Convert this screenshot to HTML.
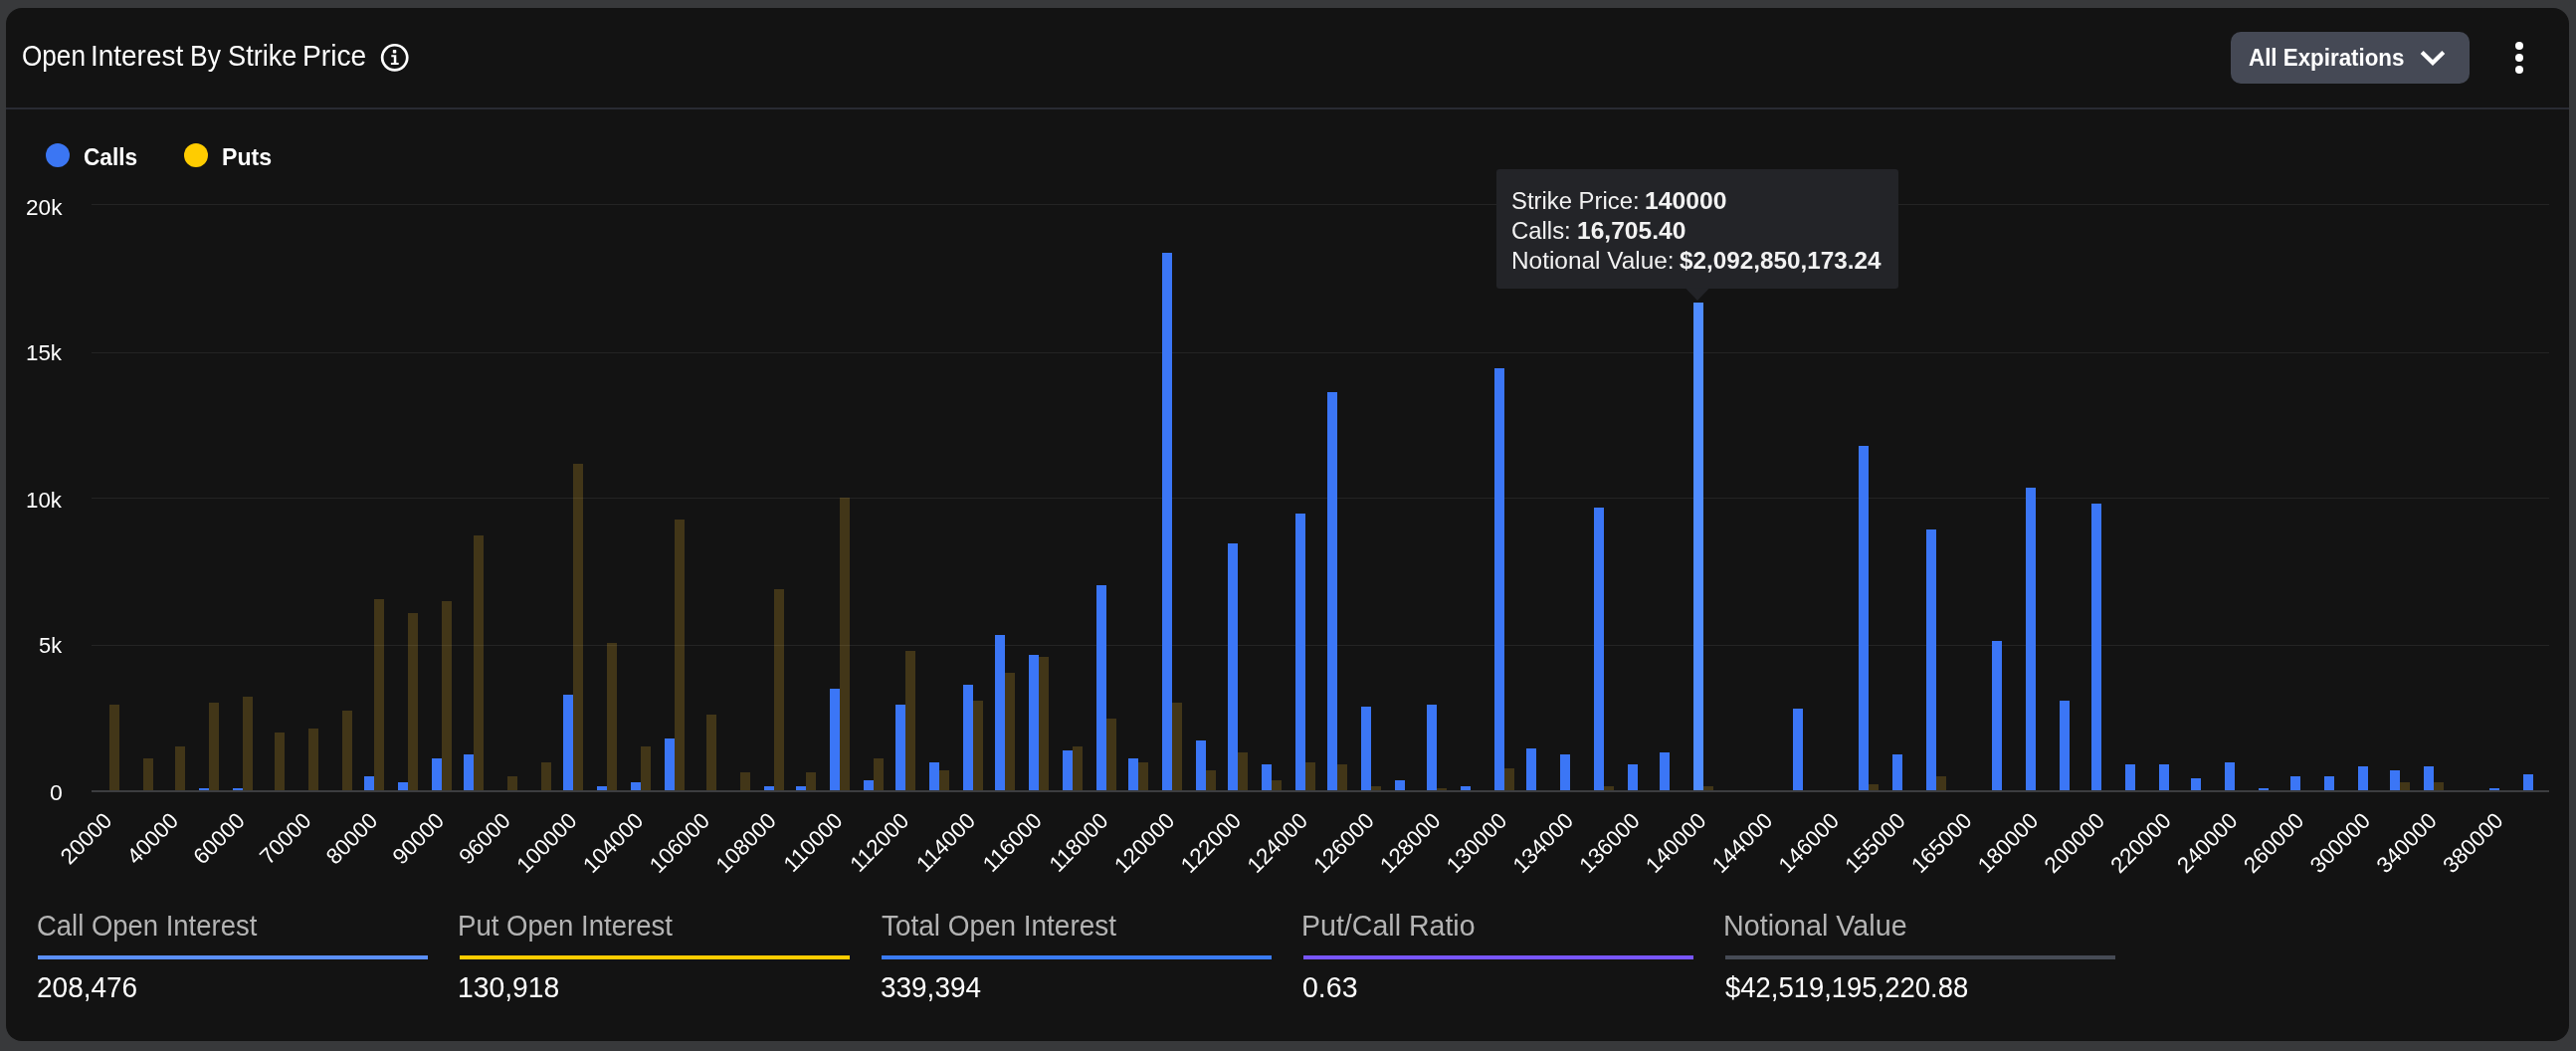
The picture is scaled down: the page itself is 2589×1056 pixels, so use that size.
<!DOCTYPE html>
<html><head><meta charset="utf-8"><title>Open Interest By Strike Price</title>
<style>
html,body{margin:0;padding:0}
body{width:2589px;height:1056px;background:#38393b;position:relative;overflow:hidden;font-family:"Liberation Sans",sans-serif}
.card{position:absolute;left:6px;top:8px;width:2576px;height:1038px;border-radius:16px;background:#131313}
.sep{position:absolute;left:6px;top:108px;width:2576px;height:2px;background:#292b33}
.t{position:absolute;white-space:nowrap;transform-origin:0 0}
.tl{position:absolute;left:0;top:0;width:2589px;height:1056px;will-change:transform}
svg{position:absolute;left:0;top:0}
svg text{font-family:"Liberation Sans",sans-serif}
.btn{position:absolute;left:2242px;top:32px;width:240px;height:52px;border-radius:10px;background:#454955}
.dot{position:absolute;width:8.3px;height:8.3px;border-radius:50%;background:#fff;left:2527.85px}
.lg{position:absolute;width:24.2px;height:24.2px;border-radius:50%;top:143.9px}
</style></head><body>
<div class="card"></div>
<div class="sep"></div>
<div class="btn"></div>
<div class="dot" style="top:41.85px"></div><div class="dot" style="top:53.85px"></div><div class="dot" style="top:66.05px"></div>
<div class="lg" style="left:45.9px;background:#3b76f3"></div>
<div class="lg" style="left:185.3px;background:#ffcc00"></div>
<svg style="will-change:transform" width="2589" height="1056" viewBox="0 0 2589 1056" shape-rendering="crispEdges">
<rect x="92" y="205" width="2470" height="1" fill="#242424"/>
<rect x="92" y="354" width="2470" height="1" fill="#242424"/>
<rect x="92" y="500" width="2470" height="1" fill="#242424"/>
<rect x="92" y="648" width="2470" height="1" fill="#242424"/>
<rect x="110" y="708" width="10" height="86" fill="#ffc42c" fill-opacity="0.2"/>
<rect x="144" y="762" width="10" height="32" fill="#ffc42c" fill-opacity="0.2"/>
<rect x="176" y="750" width="10" height="44" fill="#ffc42c" fill-opacity="0.2"/>
<rect x="200" y="792" width="10" height="2" fill="#3b76f6"/>
<rect x="210" y="706" width="10" height="88" fill="#ffc42c" fill-opacity="0.2"/>
<rect x="234" y="792" width="10" height="2" fill="#3b76f6"/>
<rect x="244" y="700" width="10" height="94" fill="#ffc42c" fill-opacity="0.2"/>
<rect x="276" y="736" width="10" height="58" fill="#ffc42c" fill-opacity="0.2"/>
<rect x="310" y="732" width="10" height="62" fill="#ffc42c" fill-opacity="0.2"/>
<rect x="344" y="714" width="10" height="80" fill="#ffc42c" fill-opacity="0.2"/>
<rect x="366" y="780" width="10" height="14" fill="#3b76f6"/>
<rect x="376" y="602" width="10" height="192" fill="#ffc42c" fill-opacity="0.2"/>
<rect x="400" y="786" width="10" height="8" fill="#3b76f6"/>
<rect x="410" y="616" width="10" height="178" fill="#ffc42c" fill-opacity="0.2"/>
<rect x="434" y="762" width="10" height="32" fill="#3b76f6"/>
<rect x="444" y="604" width="10" height="190" fill="#ffc42c" fill-opacity="0.2"/>
<rect x="466" y="758" width="10" height="36" fill="#3b76f6"/>
<rect x="476" y="538" width="10" height="256" fill="#ffc42c" fill-opacity="0.2"/>
<rect x="510" y="780" width="10" height="14" fill="#ffc42c" fill-opacity="0.2"/>
<rect x="544" y="766" width="10" height="28" fill="#ffc42c" fill-opacity="0.2"/>
<rect x="566" y="698" width="10" height="96" fill="#3b76f6"/>
<rect x="576" y="466" width="10" height="328" fill="#ffc42c" fill-opacity="0.2"/>
<rect x="600" y="790" width="10" height="4" fill="#3b76f6"/>
<rect x="610" y="646" width="10" height="148" fill="#ffc42c" fill-opacity="0.2"/>
<rect x="634" y="786" width="10" height="8" fill="#3b76f6"/>
<rect x="644" y="750" width="10" height="44" fill="#ffc42c" fill-opacity="0.2"/>
<rect x="668" y="742" width="10" height="52" fill="#3b76f6"/>
<rect x="678" y="522" width="10" height="272" fill="#ffc42c" fill-opacity="0.2"/>
<rect x="710" y="718" width="10" height="76" fill="#ffc42c" fill-opacity="0.2"/>
<rect x="744" y="776" width="10" height="18" fill="#ffc42c" fill-opacity="0.2"/>
<rect x="768" y="790" width="10" height="4" fill="#3b76f6"/>
<rect x="778" y="592" width="10" height="202" fill="#ffc42c" fill-opacity="0.2"/>
<rect x="800" y="790" width="10" height="4" fill="#3b76f6"/>
<rect x="810" y="776" width="10" height="18" fill="#ffc42c" fill-opacity="0.2"/>
<rect x="834" y="692" width="10" height="102" fill="#3b76f6"/>
<rect x="844" y="500" width="10" height="294" fill="#ffc42c" fill-opacity="0.2"/>
<rect x="868" y="784" width="10" height="10" fill="#3b76f6"/>
<rect x="878" y="762" width="10" height="32" fill="#ffc42c" fill-opacity="0.2"/>
<rect x="900" y="708" width="10" height="86" fill="#3b76f6"/>
<rect x="910" y="654" width="10" height="140" fill="#ffc42c" fill-opacity="0.2"/>
<rect x="934" y="766" width="10" height="28" fill="#3b76f6"/>
<rect x="944" y="774" width="10" height="20" fill="#ffc42c" fill-opacity="0.2"/>
<rect x="968" y="688" width="10" height="106" fill="#3b76f6"/>
<rect x="978" y="704" width="10" height="90" fill="#ffc42c" fill-opacity="0.2"/>
<rect x="1000" y="638" width="10" height="156" fill="#3b76f6"/>
<rect x="1010" y="676" width="10" height="118" fill="#ffc42c" fill-opacity="0.2"/>
<rect x="1034" y="658" width="10" height="136" fill="#3b76f6"/>
<rect x="1044" y="660" width="10" height="134" fill="#ffc42c" fill-opacity="0.2"/>
<rect x="1068" y="754" width="10" height="40" fill="#3b76f6"/>
<rect x="1078" y="750" width="10" height="44" fill="#ffc42c" fill-opacity="0.2"/>
<rect x="1102" y="588" width="10" height="206" fill="#3b76f6"/>
<rect x="1112" y="722" width="10" height="72" fill="#ffc42c" fill-opacity="0.2"/>
<rect x="1134" y="762" width="10" height="32" fill="#3b76f6"/>
<rect x="1144" y="766" width="10" height="28" fill="#ffc42c" fill-opacity="0.2"/>
<rect x="1168" y="254" width="10" height="540" fill="#3b76f6"/>
<rect x="1178" y="706" width="10" height="88" fill="#ffc42c" fill-opacity="0.2"/>
<rect x="1202" y="744" width="10" height="50" fill="#3b76f6"/>
<rect x="1212" y="774" width="10" height="20" fill="#ffc42c" fill-opacity="0.2"/>
<rect x="1234" y="546" width="10" height="248" fill="#3b76f6"/>
<rect x="1244" y="756" width="10" height="38" fill="#ffc42c" fill-opacity="0.2"/>
<rect x="1268" y="768" width="10" height="26" fill="#3b76f6"/>
<rect x="1278" y="784" width="10" height="10" fill="#ffc42c" fill-opacity="0.2"/>
<rect x="1302" y="516" width="10" height="278" fill="#3b76f6"/>
<rect x="1312" y="766" width="10" height="28" fill="#ffc42c" fill-opacity="0.2"/>
<rect x="1334" y="394" width="10" height="400" fill="#3b76f6"/>
<rect x="1344" y="768" width="10" height="26" fill="#ffc42c" fill-opacity="0.2"/>
<rect x="1368" y="710" width="10" height="84" fill="#3b76f6"/>
<rect x="1378" y="790" width="10" height="4" fill="#ffc42c" fill-opacity="0.2"/>
<rect x="1402" y="784" width="10" height="10" fill="#3b76f6"/>
<rect x="1434" y="708" width="10" height="86" fill="#3b76f6"/>
<rect x="1444" y="792" width="10" height="2" fill="#ffc42c" fill-opacity="0.2"/>
<rect x="1468" y="790" width="10" height="4" fill="#3b76f6"/>
<rect x="1502" y="370" width="10" height="424" fill="#3b76f6"/>
<rect x="1512" y="772" width="10" height="22" fill="#ffc42c" fill-opacity="0.2"/>
<rect x="1534" y="752" width="10" height="42" fill="#3b76f6"/>
<rect x="1568" y="758" width="10" height="36" fill="#3b76f6"/>
<rect x="1602" y="510" width="10" height="284" fill="#3b76f6"/>
<rect x="1612" y="790" width="10" height="4" fill="#ffc42c" fill-opacity="0.2"/>
<rect x="1636" y="768" width="10" height="26" fill="#3b76f6"/>
<rect x="1668" y="756" width="10" height="38" fill="#3b76f6"/>
<rect x="1702" y="304" width="10" height="490" fill="#4f8cff"/>
<rect x="1712" y="790" width="10" height="4" fill="#ffc42c" fill-opacity="0.2"/>
<rect x="1802" y="712" width="10" height="82" fill="#3b76f6"/>
<rect x="1868" y="448" width="10" height="346" fill="#3b76f6"/>
<rect x="1878" y="788" width="10" height="6" fill="#ffc42c" fill-opacity="0.2"/>
<rect x="1902" y="758" width="10" height="36" fill="#3b76f6"/>
<rect x="1936" y="532" width="10" height="262" fill="#3b76f6"/>
<rect x="1946" y="780" width="10" height="14" fill="#ffc42c" fill-opacity="0.2"/>
<rect x="2002" y="644" width="10" height="150" fill="#3b76f6"/>
<rect x="2036" y="490" width="10" height="304" fill="#3b76f6"/>
<rect x="2070" y="704" width="10" height="90" fill="#3b76f6"/>
<rect x="2102" y="506" width="10" height="288" fill="#3b76f6"/>
<rect x="2136" y="768" width="10" height="26" fill="#3b76f6"/>
<rect x="2170" y="768" width="10" height="26" fill="#3b76f6"/>
<rect x="2202" y="782" width="10" height="12" fill="#3b76f6"/>
<rect x="2236" y="766" width="10" height="28" fill="#3b76f6"/>
<rect x="2270" y="792" width="10" height="2" fill="#3b76f6"/>
<rect x="2302" y="780" width="10" height="14" fill="#3b76f6"/>
<rect x="2336" y="780" width="10" height="14" fill="#3b76f6"/>
<rect x="2370" y="770" width="10" height="24" fill="#3b76f6"/>
<rect x="2402" y="774" width="10" height="20" fill="#3b76f6"/>
<rect x="2412" y="786" width="10" height="8" fill="#ffc42c" fill-opacity="0.2"/>
<rect x="2436" y="770" width="10" height="24" fill="#3b76f6"/>
<rect x="2446" y="786" width="10" height="8" fill="#ffc42c" fill-opacity="0.2"/>
<rect x="2502" y="792" width="10" height="2" fill="#3b76f6"/>
<rect x="2536" y="778" width="10" height="16" fill="#3b76f6"/>
<rect x="92" y="794" width="2470" height="2" fill="#3c3d40"/>
<text x="113.8" y="826.0" text-anchor="end" transform="rotate(-45 113.8 826.0)" font-size="22.3" fill="#fff">20000</text>
<text x="180.56" y="826.0" text-anchor="end" transform="rotate(-45 180.56 826.0)" font-size="22.3" fill="#fff">40000</text>
<text x="247.31" y="826.0" text-anchor="end" transform="rotate(-45 247.31 826.0)" font-size="22.3" fill="#fff">60000</text>
<text x="314.07" y="826.0" text-anchor="end" transform="rotate(-45 314.07 826.0)" font-size="22.3" fill="#fff">70000</text>
<text x="380.82" y="826.0" text-anchor="end" transform="rotate(-45 380.82 826.0)" font-size="22.3" fill="#fff">80000</text>
<text x="447.58" y="826.0" text-anchor="end" transform="rotate(-45 447.58 826.0)" font-size="22.3" fill="#fff">90000</text>
<text x="514.34" y="826.0" text-anchor="end" transform="rotate(-45 514.34 826.0)" font-size="22.3" fill="#fff">96000</text>
<text x="581.09" y="826.0" text-anchor="end" transform="rotate(-45 581.09 826.0)" font-size="22.3" fill="#fff">100000</text>
<text x="647.85" y="826.0" text-anchor="end" transform="rotate(-45 647.85 826.0)" font-size="22.3" fill="#fff">104000</text>
<text x="714.6" y="826.0" text-anchor="end" transform="rotate(-45 714.6 826.0)" font-size="22.3" fill="#fff">106000</text>
<text x="781.36" y="826.0" text-anchor="end" transform="rotate(-45 781.36 826.0)" font-size="22.3" fill="#fff">108000</text>
<text x="848.12" y="826.0" text-anchor="end" transform="rotate(-45 848.12 826.0)" font-size="22.3" fill="#fff">110000</text>
<text x="914.87" y="826.0" text-anchor="end" transform="rotate(-45 914.87 826.0)" font-size="22.3" fill="#fff">112000</text>
<text x="981.63" y="826.0" text-anchor="end" transform="rotate(-45 981.63 826.0)" font-size="22.3" fill="#fff">114000</text>
<text x="1048.38" y="826.0" text-anchor="end" transform="rotate(-45 1048.38 826.0)" font-size="22.3" fill="#fff">116000</text>
<text x="1115.14" y="826.0" text-anchor="end" transform="rotate(-45 1115.14 826.0)" font-size="22.3" fill="#fff">118000</text>
<text x="1181.9" y="826.0" text-anchor="end" transform="rotate(-45 1181.9 826.0)" font-size="22.3" fill="#fff">120000</text>
<text x="1248.65" y="826.0" text-anchor="end" transform="rotate(-45 1248.65 826.0)" font-size="22.3" fill="#fff">122000</text>
<text x="1315.41" y="826.0" text-anchor="end" transform="rotate(-45 1315.41 826.0)" font-size="22.3" fill="#fff">124000</text>
<text x="1382.16" y="826.0" text-anchor="end" transform="rotate(-45 1382.16 826.0)" font-size="22.3" fill="#fff">126000</text>
<text x="1448.92" y="826.0" text-anchor="end" transform="rotate(-45 1448.92 826.0)" font-size="22.3" fill="#fff">128000</text>
<text x="1515.68" y="826.0" text-anchor="end" transform="rotate(-45 1515.68 826.0)" font-size="22.3" fill="#fff">130000</text>
<text x="1582.43" y="826.0" text-anchor="end" transform="rotate(-45 1582.43 826.0)" font-size="22.3" fill="#fff">134000</text>
<text x="1649.19" y="826.0" text-anchor="end" transform="rotate(-45 1649.19 826.0)" font-size="22.3" fill="#fff">136000</text>
<text x="1715.94" y="826.0" text-anchor="end" transform="rotate(-45 1715.94 826.0)" font-size="22.3" fill="#fff">140000</text>
<text x="1782.7" y="826.0" text-anchor="end" transform="rotate(-45 1782.7 826.0)" font-size="22.3" fill="#fff">144000</text>
<text x="1849.46" y="826.0" text-anchor="end" transform="rotate(-45 1849.46 826.0)" font-size="22.3" fill="#fff">146000</text>
<text x="1916.21" y="826.0" text-anchor="end" transform="rotate(-45 1916.21 826.0)" font-size="22.3" fill="#fff">155000</text>
<text x="1982.97" y="826.0" text-anchor="end" transform="rotate(-45 1982.97 826.0)" font-size="22.3" fill="#fff">165000</text>
<text x="2049.72" y="826.0" text-anchor="end" transform="rotate(-45 2049.72 826.0)" font-size="22.3" fill="#fff">180000</text>
<text x="2116.48" y="826.0" text-anchor="end" transform="rotate(-45 2116.48 826.0)" font-size="22.3" fill="#fff">200000</text>
<text x="2183.24" y="826.0" text-anchor="end" transform="rotate(-45 2183.24 826.0)" font-size="22.3" fill="#fff">220000</text>
<text x="2249.99" y="826.0" text-anchor="end" transform="rotate(-45 2249.99 826.0)" font-size="22.3" fill="#fff">240000</text>
<text x="2316.75" y="826.0" text-anchor="end" transform="rotate(-45 2316.75 826.0)" font-size="22.3" fill="#fff">260000</text>
<text x="2383.5" y="826.0" text-anchor="end" transform="rotate(-45 2383.5 826.0)" font-size="22.3" fill="#fff">300000</text>
<text x="2450.26" y="826.0" text-anchor="end" transform="rotate(-45 2450.26 826.0)" font-size="22.3" fill="#fff">340000</text>
<text x="2517.02" y="826.0" text-anchor="end" transform="rotate(-45 2517.02 826.0)" font-size="22.3" fill="#fff">380000</text>
</svg>
<svg width="2589" height="1056" viewBox="0 0 2589 1056">
<rect x="1504" y="170" width="404" height="120" rx="3" ry="3" fill="#232428"/><path d="M1694 289.5 L1718 289.5 L1706 302 Z" fill="#232428"/>
<circle cx="396.7" cy="57.8" r="12.55" fill="none" stroke="#fff" stroke-width="2.7"/>
<rect x="394.8" y="50" width="3.5" height="3.6" rx="0.8" fill="#fff"/>
<path d="M393.3 55.3 H398.3 V62.9 H400.7 V65 H392.9 V62.9 H395.8 V57.2 H393.3 Z" fill="#fff"/>
<path d="M2434.2 52.5 L2445 63.05 L2455.8 52.5" fill="none" stroke="#fff" stroke-width="4.2" stroke-linejoin="miter"/>
</svg>
<div class="tl">
<div class="t" style="left:21.93px;top:41.50px;font-size:28.94px;line-height:28.94px;color:#fff;transform:scaleX(0.9034)">Open</div>
<div class="t" style="left:91.27px;top:41.50px;font-size:28.94px;line-height:28.94px;color:#fff;transform:scaleX(0.9653)">Interest</div>
<div class="t" style="left:191.18px;top:41.50px;font-size:28.94px;line-height:28.94px;color:#fff;transform:scaleX(0.9146)">By</div>
<div class="t" style="left:228.94px;top:41.50px;font-size:28.94px;line-height:28.94px;color:#fff;transform:scaleX(0.9395)">Strike</div>
<div class="t" style="left:303.94px;top:41.50px;font-size:28.94px;line-height:28.94px;color:#fff;transform:scaleX(0.9735)">Price</div>
<div class="t" style="left:83.70px;top:146.01px;font-size:24.8px;line-height:24.8px;font-weight:700;color:#fff;transform:scaleX(0.9143)">Calls</div>
<div class="t" style="left:222.92px;top:146.01px;font-size:24.8px;line-height:24.8px;font-weight:700;color:#fff;transform:scaleX(0.9329)">Puts</div>
<div class="t" style="left:2260.44px;top:46.01px;font-size:24.8px;line-height:24.8px;font-weight:700;color:#fff;transform:scaleX(0.9010)">All Expirations</div>
<div class="t" style="left:25.87px;top:196.75px;font-size:22.74px;line-height:22.74px;color:#fff;transform:scaleX(0.9940)">20k</div>
<div class="t" style="left:26.22px;top:342.75px;font-size:22.74px;line-height:22.74px;color:#fff;transform:scaleX(0.9825)">15k</div>
<div class="t" style="left:26.22px;top:490.75px;font-size:22.74px;line-height:22.74px;color:#fff;transform:scaleX(0.9825)">10k</div>
<div class="t" style="left:38.91px;top:636.75px;font-size:22.74px;line-height:22.74px;color:#fff;transform:scaleX(0.9618)">5k</div>
<div class="t" style="left:49.87px;top:784.75px;font-size:22.74px;line-height:22.74px;color:#fff;transform:scaleX(1.0141)">0</div>
<div class="t" style="left:36.66px;top:915.50px;font-size:28.94px;line-height:28.94px;color:#b4b4b4;transform:scaleX(0.9487)">Call Open Interest</div>
<div style="position:absolute;left:38px;top:960px;width:392px;height:4px;background:#5b8ff9"></div>
<div class="t" style="left:36.92px;top:977.50px;font-size:28.94px;line-height:28.94px;color:#fff;transform:scaleX(0.9671)">208,476</div>
<div class="t" style="left:459.96px;top:915.50px;font-size:28.94px;line-height:28.94px;color:#b4b4b4;transform:scaleX(0.9524)">Put Open Interest</div>
<div style="position:absolute;left:462px;top:960px;width:392px;height:4px;background:#ffcc00"></div>
<div class="t" style="left:460.26px;top:977.50px;font-size:28.94px;line-height:28.94px;color:#fff;transform:scaleX(0.9763)">130,918</div>
<div class="t" style="left:885.65px;top:915.50px;font-size:28.94px;line-height:28.94px;color:#b4b4b4;transform:scaleX(0.9650)">Total Open Interest</div>
<div style="position:absolute;left:886px;top:960px;width:392px;height:4px;background:#3a7bf2"></div>
<div class="t" style="left:885.34px;top:977.50px;font-size:28.94px;line-height:28.94px;color:#fff;transform:scaleX(0.9655)">339,394</div>
<div class="t" style="left:1308.38px;top:915.50px;font-size:28.94px;line-height:28.94px;color:#b4b4b4;transform:scaleX(0.9868)">Put/Call Ratio</div>
<div style="position:absolute;left:1310px;top:960px;width:392px;height:4px;background:#7856ff"></div>
<div class="t" style="left:1309.38px;top:977.50px;font-size:28.94px;line-height:28.94px;color:#fff;transform:scaleX(0.9852)">0.63</div>
<div class="t" style="left:1732.30px;top:915.50px;font-size:28.94px;line-height:28.94px;color:#b4b4b4;transform:scaleX(0.9922)">Notional Value</div>
<div style="position:absolute;left:1734px;top:960px;width:392px;height:4px;background:#464b55"></div>
<div class="t" style="left:1733.81px;top:977.50px;font-size:28.94px;line-height:28.94px;color:#fff;transform:scaleX(0.9484)">$42,519,195,220.88</div>
<div class="t" style="left:1519.37px;top:190.01px;font-size:24.8px;line-height:24.8px;color:#f2f2f2;transform:scaleX(0.9615)">Strike Price:</div>
<div class="t" style="left:1653.31px;top:190.01px;font-size:24.8px;line-height:24.8px;font-weight:700;color:#f2f2f2;transform:scaleX(0.9965)">140000</div>
<div class="t" style="left:1519.39px;top:220.01px;font-size:24.8px;line-height:24.8px;color:#f2f2f2;transform:scaleX(0.9637)">Calls:</div>
<div class="t" style="left:1584.65px;top:220.01px;font-size:24.8px;line-height:24.8px;font-weight:700;color:#f2f2f2;transform:scaleX(0.9915)">16,705.40</div>
<div class="t" style="left:1518.80px;top:250.01px;font-size:24.8px;line-height:24.8px;color:#f2f2f2;transform:scaleX(0.9833)">Notional Value:</div>
<div class="t" style="left:1687.84px;top:250.01px;font-size:24.8px;line-height:24.8px;font-weight:700;color:#f2f2f2;transform:scaleX(0.9789)">$2,092,850,173.24</div>
</div>
</body></html>
